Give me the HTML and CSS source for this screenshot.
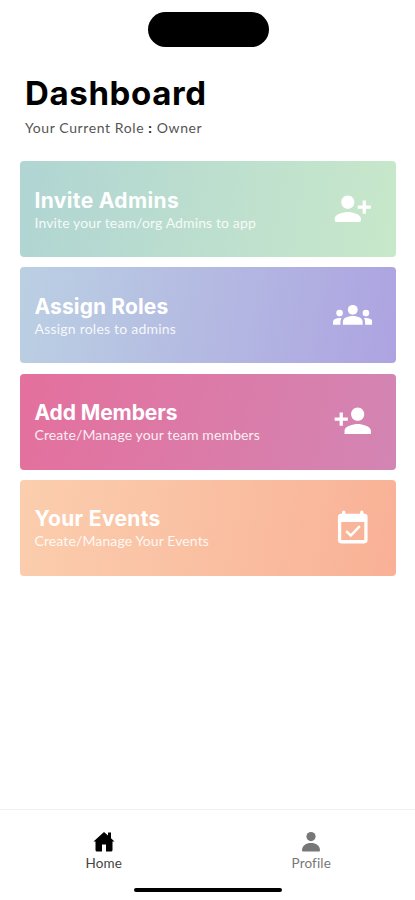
FILE: index.html
```html
<!DOCTYPE html>
<html lang="en">
<head>
    <meta charset="UTF-8">
    <meta name="viewport" content="width=device-width, initial-scale=1.0">
    <title>Dashboard</title>
    <link rel="stylesheet" href="styles.css">
</head>
<body>
    <div class="island"></div>

    <header class="header">
        <h1>Dashboard</h1>
        <p>Your Current Role <b>:</b> Owner</p>
    </header>

    <main class="cards">
        <a class="card invite">
            <div class="card-text">
                <h2>Invite Admins</h2>
                <p>Invite your team/org Admins to app</p>
            </div>
            <svg class="card-icon" viewBox="0 0 24 24"><path d="M13 8c0-2.21-1.79-4-4-4S5 5.79 5 8s1.79 4 4 4 4-1.79 4-4zm2 2v2h3v3h2v-3h3v-2h-3V7h-2v3h-3zM1 18v1q0 1 1 1h14q1 0 1-1v-1c0-2.66-5.33-4-8-4s-8 1.34-8 4z"/></svg>
        </a>
        <a class="card assign">
            <div class="card-text">
                <h2>Assign Roles</h2>
                <p>Assign roles to admins</p>
            </div>
            <svg class="card-icon" viewBox="0 0 24 24"><circle cx="12" cy="9" r="3"/><circle cx="4" cy="11" r="2"/><circle cx="20" cy="11" r="2"/><path d="M12 12.75c1.63 0 3.07.39 4.24.9 1.08.48 1.76 1.56 1.76 2.73V18H6v-1.61c0-1.18.68-2.26 1.76-2.73 1.17-.52 2.61-.91 4.24-.91zM5.13 14.1C4.76 14.04 4.39 14 4 14c-.99 0-1.93.21-2.78.58C.48 14.9 0 15.62 0 16.43V18h4.5v-1.61c0-.83.23-1.61.63-2.29zM18.87 14.1c.37-.06.74-.1 1.13-.1.99 0 1.93.21 2.78.58.74.32 1.22 1.04 1.22 1.85V18h-4.5v-1.61c0-.83-.23-1.61-.63-2.29z"/></svg>
        </a>
        <a class="card members">
            <div class="card-text">
                <h2>Add Members</h2>
                <p>Create/Manage your team members</p>
            </div>
            <svg class="card-icon" viewBox="0 0 24 24"><path d="M15 12c2.21 0 4-1.79 4-4s-1.79-4-4-4-4 1.79-4 4 1.79 4 4 4zm-9-2V7H4v3H1v2h3v3h2v-3h3v-2H6zm9 4c-2.67 0-8 1.34-8 4v2h16v-2c0-2.66-5.33-4-8-4z"/></svg>
        </a>
        <a class="card events">
            <div class="card-text">
                <h2>Your Events</h2>
                <p>Create/Manage Your Events</p>
            </div>
            <svg class="card-icon" viewBox="0 0 24 24"><path fill-rule="evenodd" d="M5.5 3.500V2.500q0-1 1-1t1 1v1h9v-1q0-1 1-1t1 1v1h.5a2 2 0 0 1 2 2V19.500a2 2 0 0 1-2 2H5a2 2 0 0 1-2-2V5.500a2 2 0 0 1 2-2zM5 8.500v11h14v-11z"/><path class="check" d="M8 14l2.800 2.700 5.500-5.700"/></svg>
        </a>
    </main>

    <nav class="tabs">
        <a class="tab active">
            <svg viewBox="0 0 22 20"><path d="M11 0L.5 9.500H2.500V18q0 1.500 1.500 1.500h5v-7h4v7h5q1.500 0 1.500-1.500V9.500h2L18 6.200V.5h-3v3z"/></svg>
            <span>Home</span>
        </a>
        <a class="tab">
            <svg viewBox="0 0 22 20"><circle cx="11" cy="4.600" r="4.600"/><path d="M2 18.500C2 13.500 6 11 11 11s9 2.500 9 7.500q0 1-1 1H3q-1 0-1-1z"/></svg>
            <span>Profile</span>
        </a>
    </nav>
    <div class="home-bar"></div>
</body>
</html>
```
FILE: styles.css
```css
* { box-sizing: border-box; }
body {
    margin: 0;
    height: 900px;
    display: flex;
    flex-direction: column;
    background: #fff;
    font-family: Lato, sans-serif;
    overflow: hidden;
}
h1, h2, p { margin: 0; }
h1, h2 { font-family: Inter, sans-serif; font-weight: 700; }

.island {
    width: 121px;
    height: 35px;
    margin: 11.500px 0 0 147.500px;
    border-radius: 18px;
    background: #000;
}

.header { padding: 26px 25px 0; }
.header h1 { font-size: 33px; line-height: 40px; letter-spacing: .65px; color: #000; }
.header p { margin-top: 5px; font-size: 14px; line-height: 20px; letter-spacing: .6px; color: #555; }
.header b { color: #222; }

.cards {
    display: flex;
    flex-direction: column;
    gap: 10.300px;
    padding: 23.500px 19px 0 20px;
}
.card {
    height: 96px;
    display: flex;
    align-items: center;
    justify-content: space-between;
    padding: 0 24px 0 14.500px;
    border-radius: 4px;
    color: #fff;
}
.card-text { padding-top: 3px; }
.card h2 { font-size: 21px; line-height: 24px; }
.card p { font-size: 14px; line-height: 20px; letter-spacing: .12px; opacity: .88; }
.card-icon { width: 39.500px; height: 39.500px; margin-bottom: 1px; fill: #fff; }
.check { fill: none; stroke: #fff; stroke-width: 1.500; }

.invite { background: linear-gradient(100deg, #b0d5d3, #c8e8ca); }
.assign { background: linear-gradient(100deg, #bbd0e3, #ada3e1); }
.members { background: linear-gradient(100deg, #e4709d, #d385b3); }
.events { background: linear-gradient(100deg, #fbceae, #f9b196); }
.invite h2, .events h2 { letter-spacing: .35px; }
.assign h2 { letter-spacing: .12px; }
.members h2 { letter-spacing: -.1px; }
.assign p { letter-spacing: .22px; }

.tabs {
    display: flex;
    height: 79px;
    margin-top: auto;
    padding-top: 22px;
    border-top: 1px solid #f1f1f1;
}
.tab {
    flex: 1;
    display: flex;
    flex-direction: column;
    align-items: center;
    gap: 1px;
    font-size: 13.500px;
    line-height: 20px;
    letter-spacing: .15px;
    color: #777;
}
.tab svg { width: 22px; height: 20px; fill: #777; }
.active { color: #444; }
.active svg { fill: #000; }

.home-bar {
    width: 148px;
    height: 4px;
    margin: 0 0 8px 134px;
    border-radius: 2px;
    background: #000;
}
```
